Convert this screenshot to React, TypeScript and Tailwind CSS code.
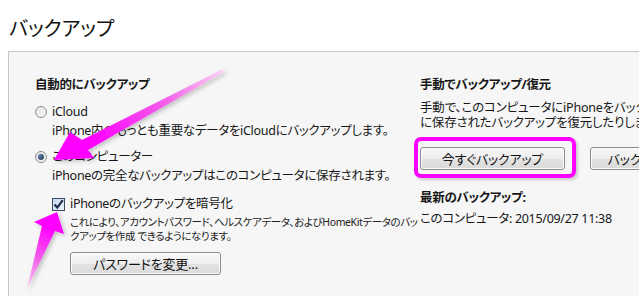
import React from 'react';

const font = "font-['Noto_Sans','Noto_Sans_CJK_JP',sans-serif] [font-feature-settings:'palt']";
const body = 'text-[12.5px] leading-[16px] tracking-[-0.3px]';

function Radio({ checked }: { checked?: boolean }) {
  return (
    <span className="flex h-[12px] w-[12px] shrink-0 items-center justify-center rounded-full border border-[#8a8c8e] bg-[linear-gradient(135deg,#e2e2e2,#fbfbfb)]">
      {checked && (
        <span className="h-[6px] w-[6px] rounded-full bg-[radial-gradient(circle_at_35%_35%,#5b7fa8,#1c2f4a)]" />
      )}
    </span>
  );
}

function Checkbox() {
  return (
    <span className="flex h-[13px] w-[13px] shrink-0 items-center justify-center border border-[#3a4a63] bg-[linear-gradient(135deg,#c7d9ee,#eaf2fb)]">
      <svg width="11" height="11" viewBox="0 0 11 11">
        <path d="M1.5 5.5 L4.3 8.6 L9.8 1.2" fill="none" stroke="#1b2d4a" strokeWidth="2.2" />
      </svg>
    </span>
  );
}

function Button({ children, className = '' }: { children: React.ReactNode; className?: string }) {
  return (
    <button
      type="button"
      className={`flex h-[23px] items-center justify-center whitespace-nowrap rounded-[3px] border border-[#8c8c8c] bg-[linear-gradient(to_bottom,#f7f7f7,#eeeeee_50%,#e3e3e3_51%,#dadada)] text-[13px] leading-[16px] tracking-[-0.2px] text-[#111] shadow-[inset_0_0_0_1px_#fbfbfb] ${className}`}
    >
      {children}
    </button>
  );
}

function Arrows() {
  return (
    <svg className="pointer-events-none absolute left-0 top-0" width="639" height="296" viewBox="0 0 639 296">
      <defs>
        <linearGradient id="a1" gradientUnits="userSpaceOnUse" x1="223" y1="70" x2="95" y2="145">
          <stop offset="0" stopColor="#f9d4f4" />
          <stop offset="0.45" stopColor="#f35ee8" />
          <stop offset="1" stopColor="#ff00ff" />
        </linearGradient>
        <linearGradient id="a2" gradientUnits="userSpaceOnUse" x1="27" y1="289" x2="50" y2="228">
          <stop offset="0" stopColor="#f9d4f4" />
          <stop offset="0.5" stopColor="#f35ee8" />
          <stop offset="1" stopColor="#ff00ff" />
        </linearGradient>
        <filter id="sh" x="-20%" y="-20%" width="140%" height="140%">
          <feDropShadow dx="2" dy="2" stdDeviation="2" floodColor="#000" floodOpacity="0.22" />
        </filter>
      </defs>
      <polygon
        points="54,160 70,132 82,140 223,69 224,72 88,150 94,158"
        fill="url(#a1)"
        filter="url(#sh)"
      />
      <polygon
        points="57,212 64,234 55,231 27,289 42,226 34,222"
        fill="url(#a2)"
        filter="url(#sh)"
      />
    </svg>
  );
}

export default function App() {
  return (
    <div className={`relative h-[296px] w-[639px] overflow-hidden bg-white text-[#161616] ${font}`}>
      <h1 className="pl-[9px] pt-[17px] text-[20px] font-normal leading-[24px] text-[#111]">バックアップ</h1>

      <div className="ml-[8px] mt-[10px] flex h-[260px] border-l border-t border-[#c6c6c6] bg-[#f6f6f6] pl-[26px] pt-[25px]">
        {/* left column */}
        <div className="w-[385px] shrink-0">
          <div className={`${body} font-bold`}>自動的にバックアップ</div>

          <div className={`${body} mt-[11px] flex items-center gap-[5px]`}>
            <Radio />
            <span>iCloud</span>
          </div>
          <div className={`${body} ml-[17px] mt-[3px] whitespace-nowrap`}>
            iPhone内のもっとも重要なデータをiCloudにバックアップします。
          </div>

          <div className={`${body} mt-[10px] flex items-center gap-[5px]`}>
            <Radio checked />
            <span>このコンピューター</span>
          </div>
          <div className={`${body} ml-[17px] mt-[3px] whitespace-nowrap`}>
            iPhoneの完全なバックアップはこのコンピュータに保存されます。
          </div>

          <div className={`${body} ml-[17px] mt-[12px] flex items-center gap-[5px]`}>
            <Checkbox />
            <span>iPhoneのバックアップを暗号化</span>
          </div>
          <div className="ml-[35px] mt-[3px] text-[10.5px] leading-[14px] tracking-[-0.4px] text-[#222]">
            <div className="whitespace-nowrap">これにより、アカウントパスワード、ヘルスケアデータ、およびHomeKitデータのバッ</div>
            <div className="whitespace-nowrap">クアップを作成 できるようになります。</div>
          </div>

          <Button className="ml-[35px] mt-[9px] w-[151px]">パスワードを変更...</Button>
        </div>

        {/* right column */}
        <div className="min-w-0 shrink-0">
          <div className={`${body} font-bold`}>手動でバックアップ/復元</div>
          <div className="mt-[7px] whitespace-nowrap text-[12.5px] leading-[15px] tracking-[-0.2px]">
            <div>手動で、このコンピュータにiPhoneをバックアップしたり、このコンピュータ</div>
            <div>に保存されたバックアップを復元したりします。</div>
          </div>

          <div className="mt-[17px] flex items-start gap-[25px]">
            <div className="relative">
              <Button className="w-[145px]">今すぐバックアップ</Button>
              <div className="pointer-events-none absolute -left-[6px] -top-[10px] h-[41px] w-[162px] rounded-[7px] border-4 border-[#ff00ff] shadow-[2px_2px_3px_rgba(0,0,0,0.18)]" />
            </div>
            <Button className="w-[150px]">バックアップを復元...</Button>
          </div>

          <div className={`${body} mt-[20px] font-bold`}>最新のバックアップ:</div>
          <div className={`${body} mt-[5px] whitespace-nowrap`}>このコンピュータ: 2015/09/27 11:38</div>
        </div>
      </div>

      <Arrows />
    </div>
  );
}
